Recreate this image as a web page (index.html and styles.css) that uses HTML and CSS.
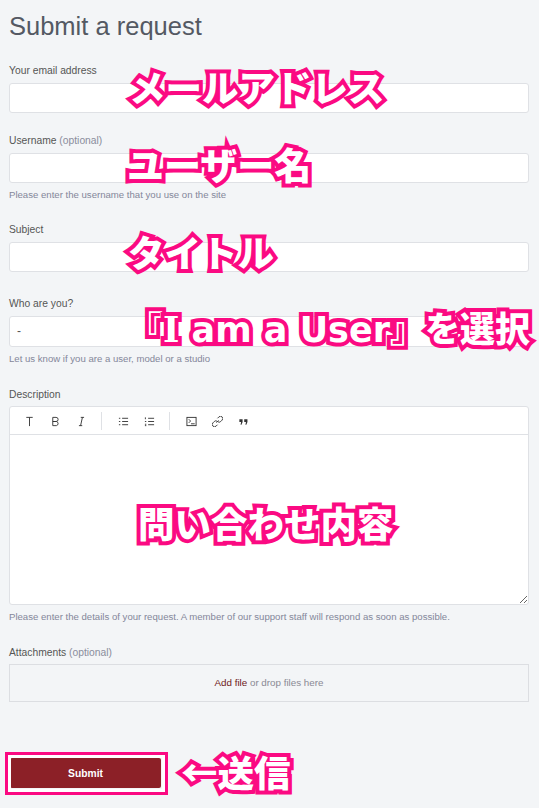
FILE: index.html
```html
<!DOCTYPE html>
<html lang="ja">
<head>
    <meta charset="UTF-8">
    <meta name="viewport" content="width=device-width, initial-scale=1.0">
    <title>Submit a request</title>
    <link rel="stylesheet" href="styles.css">
</head>
<body>
    <div class="page">
        <h1>Submit a request</h1>
        <form class="request-form">
            <div class="field field-email">
                <label>Your email address</label>
                <input type="text" class="input">
            </div>
            <div class="field field-username">
                <label>Username <span class="optional">(optional)</span></label>
                <input type="text" class="input">
                <p class="hint">Please enter the username that you use on the site</p>
            </div>
            <div class="field field-subject">
                <label>Subject</label>
                <input type="text" class="input">
            </div>
            <div class="field field-who">
                <label>Who are you?</label>
                <div class="input select">-</div>
                <p class="hint">Let us know if you are a user, model or a studio</p>
            </div>
            <div class="field field-description">
                <label>Description</label>
                <div class="editor">
                    <div class="toolbar">
                        <div class="tool-group">
                            <button type="button" class="tool">
                                <svg viewBox="0 0 12 12"><path d="M2.500 1.500h7M6 1.500v9.500"/></svg>
                            </button>
                            <button type="button" class="tool">
                                <svg viewBox="0 0 12 12"><path d="M3 1.500h3.600a2.200 2.200 0 0 1 0 4.500H3zM3 6h4a2.300 2.300 0 0 1 0 4.500H3z"/></svg>
                            </button>
                            <button type="button" class="tool">
                                <svg viewBox="0 0 12 12"><path d="M7 1.500 5 10.500M5.200 1.500h3.600M3.200 10.500h3.600"/></svg>
                            </button>
                        </div>
                        <div class="tool-group">
                            <button type="button" class="tool">
                                <svg viewBox="0 0 12 12"><path d="M4.500 2.500H11M4.500 6H11M4.500 9.500H11M1 2.500h1.500M1 6h1.500M1 9.500h1.500"/></svg>
                            </button>
                            <button type="button" class="tool">
                                <svg viewBox="0 0 12 12"><path d="M4.500 2.500H11M4.500 6H11M4.500 9.500H11M1.500 1.500v2M1 6h1.500M1 9h1.500M1 10.500h1.500"/></svg>
                            </button>
                        </div>
                        <div class="tool-group">
                            <button type="button" class="tool">
                                <svg viewBox="0 0 12 12"><rect x="1" y="1.500" width="10" height="9"/><path d="M3 3.500 5 5.500 3 7.500M5.500 8.500h4"/></svg>
                            </button>
                            <button type="button" class="tool">
                                <svg viewBox="0 0 12 12"><path d="M4.800 7.200 7.200 4.800M6 2.500l1.500-1.500a2.400 2.400 0 0 1 3.500 3.500L9.500 6a2.400 2.400 0 0 1-3.200.2M6 9.500 4.500 11A2.400 2.400 0 0 1 1 7.500L2.500 6a2.400 2.400 0 0 1 3.200-.2"/></svg>
                            </button>
                            <button type="button" class="tool">
                                <svg viewBox="0 0 12 12" class="filled"><path d="M1.500 3.500h3.500v3L3.800 9.500H2.800L3.400 6.500H1.500zM6.800 3.500h3.500v3L9.100 9.500H8.100L8.700 6.500H6.800z"/></svg>
                            </button>
                        </div>
                    </div>
                    <textarea class="editor-body"></textarea>
                </div>
                <p class="hint">Please enter the details of your request. A member of our support staff will respond as soon as possible.</p>
            </div>
            <div class="field field-attachments">
                <label>Attachments <span class="optional">(optional)</span></label>
                <div class="dropzone"><a href="#">Add file</a> or drop files here</div>
            </div>
            <div class="actions">
                <button type="button" class="submit">Submit</button>
            </div>
        </form>

        <!-- Pink captions painted on top of the form -->
        <div class="note note-email">メールアドレス</div>
        <div class="note note-username">ユーザー名</div>
        <div class="note note-subject">タイトル</div>
        <div class="note note-who">『<span class="slab">I</span> am a User』を選択</div>
        <div class="note note-description">問い合わせ内容</div>
        <div class="note note-submit">←送信</div>
        <div class="submit-frame"></div>
    </div>
</body>
</html>
```

FILE: styles.css
```css
* {
    margin: 0;
    padding: 0;
    box-sizing: border-box;
}

body {
    background: #f3f5f7;
    color: #555;
    font-family: "Liberation Sans", Arial, sans-serif;
}

.page {
    position: relative;
    height: 808px;
    overflow: hidden;
    padding: 11px 10px 0 9px;
}

h1 {
    font-size: 25.500px;
    font-weight: 400;
    line-height: 30px;
    color: #545963;
}

label {
    display: block;
    font-size: 10.300px;
    line-height: 13px;
    margin-bottom: 6px;
    color: #555;
}

.optional {
    color: #8a8d9c;
}

.field-email { margin-top: 23px; }
.field-username { margin-top: 21px; }
.field-subject { margin-top: 22px; }
.field-who { margin-top: 25px; }
.field-description { margin-top: 23px; }
.field-description label { margin-bottom: 5px; }
.field-attachments { margin-top: 23px; }
.field-attachments label { margin-bottom: 5px; }

.input {
    display: block;
    width: 100%;
    height: 30px;
    background: #fff;
    border: 1px solid #dfe1e5;
    border-radius: 3px;
}

.select {
    height: 31px;
    padding-left: 7px;
    font-size: 12px;
    line-height: 29px;
    color: #555;
}

.hint {
    font-size: 9.600px;
    line-height: 13px;
    margin-top: 5px;
    color: #84879a;
}

.editor {
    background: #fff;
    border: 1px solid #dfe1e5;
    border-radius: 3px;
    height: 199px;
    display: flex;
    flex-direction: column;
}

.toolbar {
    display: flex;
    height: 28px;
    border-bottom: 1px solid #dfe1e5;
    padding: 5px 0 4px 8px;
}

.tool-group {
    display: flex;
    gap: 4px;
    padding-right: 9px;
    margin-right: 10px;
    border-right: 1px solid #dfe1e5;
}

.tool-group:last-child {
    border-right: none;
}

.tool {
    width: 22px;
    height: 18px;
    background: none;
    border: none;
    display: flex;
    align-items: center;
    justify-content: center;
}

.tool svg {
    width: 11px;
    height: 11px;
    fill: none;
    stroke: #333;
    stroke-width: 1;
}

.tool svg.filled {
    fill: #333;
    stroke: none;
}

.editor-body {
    flex: 1;
    width: 100%;
    border: none;
    background: none;
    border-radius: 0 0 3px 3px;
    outline: none;
}

.dropzone {
    height: 38px;
    border: 1px solid #dcdee2;
    font-size: 9.800px;
    line-height: 36px;
    text-align: center;
    color: #8a8a95;
}

.dropzone a {
    color: #6e1a20;
    text-decoration: none;
}

.actions {
    margin-top: 56px;
    padding-left: 1px;
}

.submit {
    display: block;
    width: 151px;
    height: 30px;
    background: #8c2027;
    border: none;
    border-radius: 2px;
    color: #fff;
    font-family: inherit;
    font-size: 10.300px;
    font-weight: 700;
}

.submit-frame {
    position: absolute;
    left: 5px;
    top: 752px;
    width: 163px;
    height: 43px;
    border: 3px solid #fb0a82;
    box-shadow: inset 0 0 0 3px #fff;
}

.note {
    position: absolute;
    font-family: "Noto Sans CJK JP", "Noto Sans", sans-serif;
    font-weight: 900;
    font-size: 36.500px;
    line-height: 44px;
    white-space: nowrap;
    color: #fff;
    -webkit-text-stroke: 8px #fb0a82;
    paint-order: stroke fill;
}

.note-email { left: 129px; top: 65px; }
.note-username { left: 127px; top: 142px; font-size: 37px; }
.note-subject { left: 128px; top: 230px; }
.note-who {
    left: 128px;
    top: 308px;
    font-family: "DejaVu Sans", "Noto Sans CJK JP", sans-serif;
    font-size: 35px;
}
.note-who .slab { font-family: "DejaVu Serif", serif; }
.note-description { left: 138px; top: 501px; }
.note-submit { left: 181px; top: 750px; }
```
